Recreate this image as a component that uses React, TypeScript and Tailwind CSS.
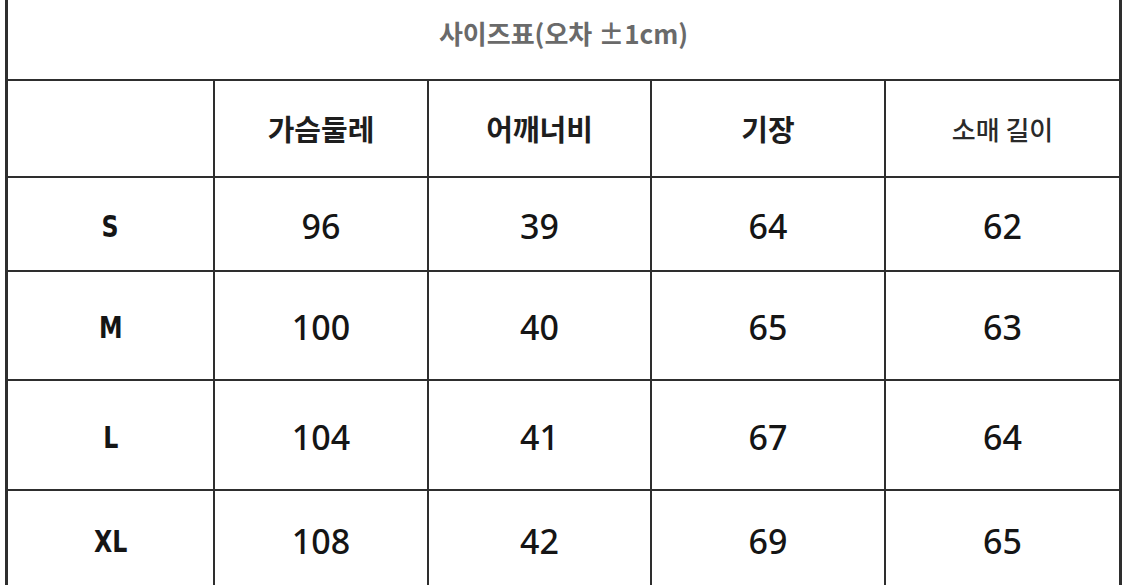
import React from "react";

const headers = ["", "가슴둘레", "어깨너비", "기장", "소매 길이"];

const rows = [
  { size: "S", values: ["96", "39", "64", "62"], h: "h-[94px]" },
  { size: "M", values: ["100", "40", "65", "63"], h: "h-[109px]" },
  { size: "L", values: ["104", "41", "67", "64"], h: "h-[110px]" },
  { size: "XL", values: ["108", "42", "69", "65"], h: "h-[96px]" },
];

const colWidths = ["w-[207px]", "w-[214px]", "w-[223px]", "w-[234px]", "w-[233px]"];

const krFont = "font-['Noto_Sans_CJK_KR','Noto_Sans',sans-serif]";

export default function App() {
  return (
    <div className="w-[1125px] h-[585px] overflow-hidden bg-white">
      <div className="ml-[5px] w-[1117px] border-x-[3px] border-[#2e2e2e]">
        {/* Title */}
        <div
          className={`flex h-[81px] items-center justify-center border-b-2 border-[#2e2e2e] pb-[14px] text-[26px] font-bold text-[#6a6a6a] ${krFont}`}
        >
          사이즈표(오차 ±1cm)
        </div>

        {/* Header row */}
        <div className="flex h-[97px] border-b-2 border-[#2e2e2e]">
          {headers.map((h, i) => (
            <div
              key={i}
              className={`${colWidths[i]} flex items-center justify-center ${
                i < 4 ? "border-r-2 border-[#2e2e2e]" : ""
              } ${krFont} ${
                i === 4
                  ? "text-[26px] font-medium text-[#2a2a2a]"
                  : "text-[29px] font-bold text-[#1e1e1e]"
              }`}
            >
              {h}
            </div>
          ))}
        </div>

        {/* Data rows */}
        {rows.map((row, r) => (
          <div
            key={row.size}
            className={`flex ${row.h} ${r < rows.length - 1 ? "border-b-2 border-[#2e2e2e]" : ""}`}
          >
            <div
              className={`${colWidths[0]} flex items-center justify-center border-r-2 border-[#2e2e2e] pt-[4px]`}
            >
              <span className="inline-block scale-x-[0.85] font-['DejaVu_Sans_Condensed','DejaVu_Sans',sans-serif] text-[31px] font-bold text-[#151515]">
                {row.size}
              </span>
            </div>
            {row.values.map((v, i) => (
              <div
                key={i}
                className={`${colWidths[i + 1]} flex items-center justify-center pt-[4px] ${
                  i < 3 ? "border-r-2 border-[#2e2e2e]" : ""
                } font-['Noto_Sans',sans-serif] text-[34px] font-medium text-[#151515]`}
              >
                {v}
              </div>
            ))}
          </div>
        ))}
      </div>
    </div>
  );
}
